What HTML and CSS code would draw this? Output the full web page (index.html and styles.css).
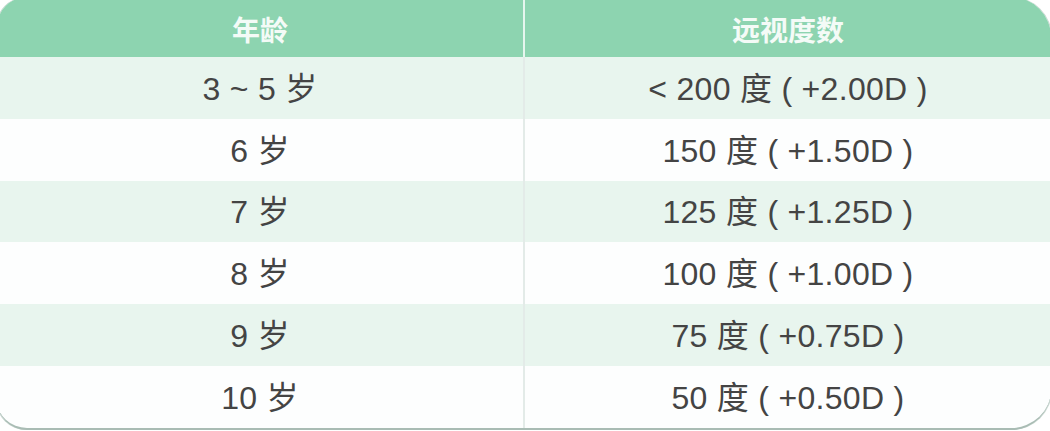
FILE: index.html
```html
<!DOCTYPE html>
<html lang="zh-CN">
<head>
<meta charset="utf-8">
<title>年龄与远视度数</title>
<link rel="stylesheet" href="styles.css">
</head>
<body>
<div class="card">
  <table class="tbl">
    <thead>
      <tr class="head"><th>年龄</th><th>远视度数</th></tr>
    </thead>
    <tbody>
      <tr class="alt"><td>3 ~ 5 岁</td><td>&lt; 200 度 ( +2.00D )</td></tr>
      <tr><td>6 岁</td><td>150 度 ( +1.50D )</td></tr>
      <tr class="alt"><td>7 岁</td><td>125 度 ( +1.25D )</td></tr>
      <tr><td>8 岁</td><td>100 度 ( +1.00D )</td></tr>
      <tr class="alt"><td>9 岁</td><td>75 度 ( +0.75D )</td></tr>
      <tr><td>10 岁</td><td>50 度 ( +0.50D )</td></tr>
    </tbody>
  </table>
</div>
</body>
</html>
```
FILE: styles.css
```css
html, body {
  margin: 0;
  padding: 0;
  background: #ffffff;
}
body {
  overflow: hidden;
}
.card {
  width: 1054px;
  margin: -3px 0 0 -3px;
  border-radius: 30px 40px 40px 30px;
  overflow: hidden;
  border-bottom: 2px solid #a9bcb4;
  box-shadow: -1px 0 0 #c9d7d1, 1px 0 0 #c9d7d1;
  background: #fdfefe;
}
.tbl {
  width: 100%;
  border-collapse: collapse;
  table-layout: fixed;
  font-family: "Liberation Sans", "Noto Sans CJK SC", sans-serif;
}
.tbl th,
.tbl td {
  width: 50%;
  text-align: center;
  padding: 0;
}
.head th {
  height: 57px;
  background: #8dd4b0;
  color: #f4fbf7;
  font-family: "Noto Sans CJK SC", sans-serif;
  font-weight: 700;
  font-size: 28px;
  padding-top: 3px;
}
.head th:first-child {
  border-right: 2px solid #e6f6ee;
}
.tbl td {
  height: 59.8px;
  color: #444444;
  font-size: 32px;
  letter-spacing: 0.3px;
  line-height: 1;
  padding-top: 2px;
}
.tbl td:first-child {
  border-right: 2px solid #e3ebe8;
}
.tbl tr.alt td {
  background: #e8f5ee;
}
```
